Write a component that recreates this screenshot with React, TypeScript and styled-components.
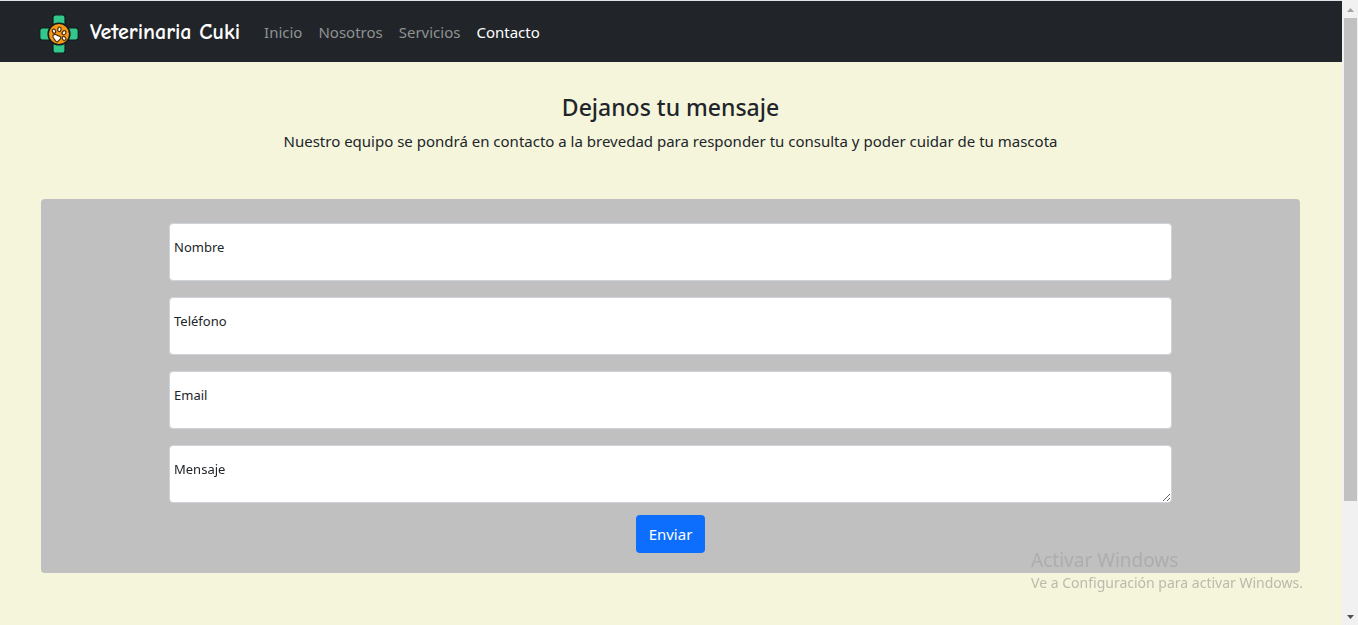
import React from "react";
import styled, { createGlobalStyle } from "styled-components";

const GlobalStyle = createGlobalStyle`
  * { box-sizing: border-box; }
  body {
    margin: 0;
    background: #f5f5dc;
    color: #212529;
    font-family: "Segoe UI", "Noto Sans", "Open Sans", sans-serif;
    font-size: 15px;
    line-height: 24px;
  }
`;

const Shell = styled.div`
  display: flex;
  min-height: 100vh;
`;

const Page = styled.div`
  flex: 1;
  min-width: 0;
`;

const Navbar = styled.nav`
  display: flex;
  align-items: center;
  gap: 24px;
  height: 62px;
  padding: 0 39px;
  border-top: 1px solid #dde5e8;
  background: #212529;
`;

const Brand = styled.a`
  display: flex;
  align-items: center;
  gap: 11px;
  color: #fff;
  font-family: "Comic Sans MS", "Comic Neue", "Noto Sans", sans-serif;
  font-size: 22px;
  font-weight: 700;
  line-height: 30px;
  text-decoration: none;
`;

const Logo = styled.svg`
  display: block;
  width: 40px;
  height: 40px;
  margin-top: 4px;
`;

const NavList = styled.ul`
  display: flex;
  gap: 16px;
  margin: 0;
  padding: 0;
  list-style: none;
`;

const NavLink = styled.a<{ $active?: boolean }>`
  color: ${(p) => (p.$active ? "#fff" : "#909294")};
  text-decoration: none;
`;

const Main = styled.main`
  padding: 30px 42px 52px 41px;
`;

const Intro = styled.header`
  margin-bottom: 46px;
  text-align: center;
`;

const Title = styled.h1`
  margin: 0 0 6px;
  font-size: 23px;
  font-weight: 500;
  line-height: 31px;
`;

const Lead = styled.p`
  margin: 0;
`;

const Form = styled.form`
  display: flex;
  flex-direction: column;
  align-items: center;
  padding: 24px 128px 20px;
  border-radius: 4px;
  background: #c0c0c0;
`;

const Fields = styled.div`
  display: grid;
  gap: 16px;
  width: 100%;
  margin-bottom: 12px;
`;

const Field = styled.div`
  display: grid;
  height: 58px;

  > * { grid-area: 1 / 1; }
`;

const Label = styled.label`
  z-index: 1;
  justify-self: start;
  padding: 14px 5px;
  font-size: 13px;
  line-height: 20px;
  pointer-events: none;
`;

const Input = styled.input`
  width: 100%;
  height: 58px;
  padding: 26px 12px 10px;
  border: 1px solid #ced4da;
  border-radius: 4px;
  background: #fff;
  font: inherit;
`;

const TextArea = styled(Input).attrs({ as: "textarea" })`
  display: block;
  resize: vertical;
`;

const Submit = styled.button`
  height: 38px;
  padding: 0 13px;
  border: 0;
  border-radius: 4px;
  background: #0d6efd;
  color: #fff;
  font: inherit;
`;

const ScrollBar = styled.div`
  display: flex;
  flex-direction: column;
  width: 16px;
  padding: 0 1px 0 2px;
  background: #f1f1f1;
`;

const ScrollArrow = styled.svg`
  display: block;
  flex: none;
  width: 13px;
  height: 18px;
`;

const ScrollTrack = styled.div`
  flex: 1;
`;

const ScrollThumb = styled.div`
  height: 82%;
  background: #c1c1c1;
`;

const Watermark = styled.aside`
  position: fixed;
  right: 55px;
  bottom: 32px;
  color: rgba(128, 128, 128, 0.5);
  font-size: 14px;
  line-height: 20px;
  pointer-events: none;
`;

const WatermarkTitle = styled.div`
  color: rgba(128, 128, 128, 0.3);
  font-size: 19px;
  line-height: 26px;
`;

const links = ["Inicio", "Nosotros", "Servicios", "Contacto"];

const fields = [
  { id: "nombre", label: "Nombre", type: "text" },
  { id: "telefono", label: "Teléfono", type: "tel" },
  { id: "email", label: "Email", type: "email" },
];

const VetLogo = () => (
  <Logo viewBox="0 0 40 40" aria-hidden="true">
    <g fill="#34c78b" stroke="#101c1d" strokeWidth="1.2">
      <rect x="14" y="0.8" width="12" height="13" rx="2.5" />
      <rect x="14" y="26.2" width="12" height="13" rx="2.5" />
      <rect x="0.8" y="14" width="13" height="12" rx="2.5" />
      <rect x="26.2" y="14" width="13" height="12" rx="2.5" />
    </g>
    <circle cx="20" cy="20" r="10.8" fill="#f39817" stroke="#171b1c" strokeWidth="1.6" />
    <g fill="#fff" stroke="#51300f" strokeWidth="1.2">
      <path d="M14 21.400c1.200-1.400 3-1.200 4.200-.2 1.300 1 3.600.6 3.600 2.600 0 1.600-1.700 1.900-2.300 3-.8 1.400-2.600 1.300-3.300-.2-.8-1.700-3.300-3.400-2.200-5.200Z" />
      <ellipse cx="15" cy="17.200" rx="1.600" ry="2.100" transform="rotate(-20 15 17.200)" />
      <ellipse cx="20.400" cy="15.400" rx="1.600" ry="2.200" transform="rotate(15 20.400 15.400)" />
      <ellipse cx="25" cy="18.800" rx="1.700" ry="2.200" transform="rotate(35 25 18.800)" />
      <ellipse cx="25" cy="24.400" rx="1.600" ry="2.100" transform="rotate(-35 25 24.400)" />
    </g>
  </Logo>
);

export default function App() {
  return (
    <>
      <GlobalStyle />
      <Shell>
        <Page>
          <Navbar>
            <Brand href="#">
              <VetLogo />
              Veterinaria Cuki
            </Brand>
            <NavList>
              {links.map((link) => (
                <li key={link}>
                  <NavLink href="#" $active={link === "Contacto"}>{link}</NavLink>
                </li>
              ))}
            </NavList>
          </Navbar>
          <Main>
            <Intro>
              <Title>Dejanos tu mensaje</Title>
              <Lead>
                Nuestro equipo se pondrá en contacto a la brevedad para responder tu consulta y poder cuidar de tu mascota
              </Lead>
            </Intro>
            <Form onSubmit={(e) => e.preventDefault()}>
              <Fields>
                {fields.map((f) => (
                  <Field key={f.id}>
                    <Label htmlFor={f.id}>{f.label}</Label>
                    <Input id={f.id} type={f.type} />
                  </Field>
                ))}
                <Field>
                  <Label htmlFor="mensaje">Mensaje</Label>
                  <TextArea id="mensaje" />
                </Field>
              </Fields>
              <Submit type="submit">Enviar</Submit>
            </Form>
          </Main>
        </Page>
        <ScrollBar aria-hidden="true">
          <ScrollArrow viewBox="0 0 13 18">
            <path d="M3 12h7L6.500 8Z" fill="#a3a3a3" />
          </ScrollArrow>
          <ScrollTrack>
            <ScrollThumb />
          </ScrollTrack>
          <ScrollArrow viewBox="0 0 13 18">
            <path d="M3 8h7L6.500 12Z" fill="#505050" />
          </ScrollArrow>
        </ScrollBar>
      </Shell>
      <Watermark>
        <WatermarkTitle>Activar Windows</WatermarkTitle>
        Ve a Configuración para activar Windows.
      </Watermark>
    </>
  );
}
